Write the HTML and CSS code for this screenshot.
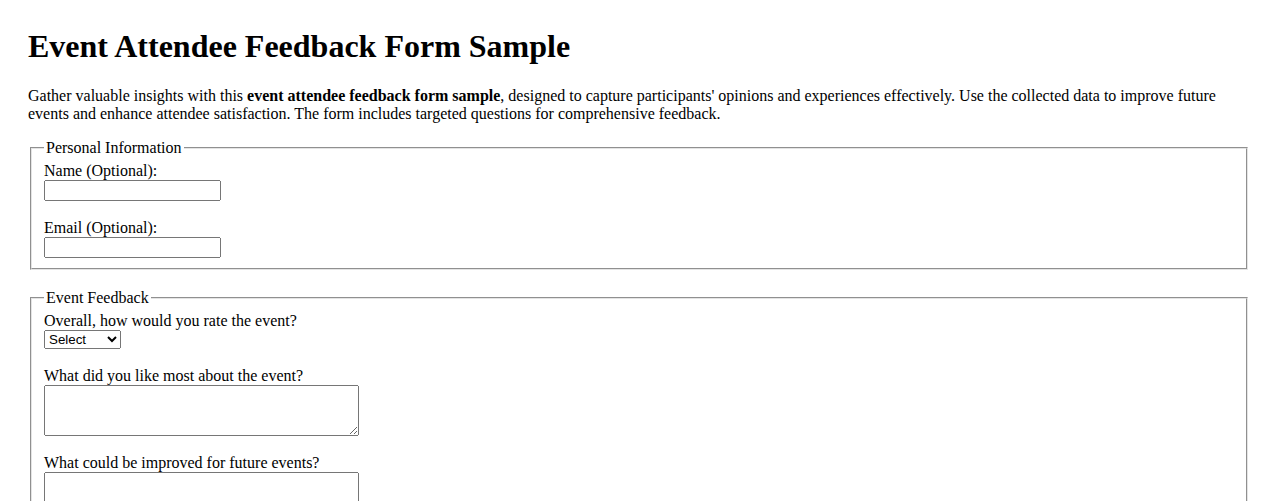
FILE: index.html
```html
<!DOCTYPE html>
<html lang="en">
<head>
<meta charset="utf-8">
<title>Event Attendee Feedback Form Sample</title>
<link rel="stylesheet" href="styles.css">
</head>
<body>
<h1 class="title">Event Attendee Feedback Form Sample</h1>
<p class="intro">Gather valuable insights with this <strong>event attendee feedback form sample</strong>, designed to capture participants' opinions and experiences effectively. Use the collected data to improve future events and enhance attendee satisfaction. The form includes targeted questions for comprehensive feedback.</p>
<form class="form">
  <fieldset class="section">
    <legend>Personal Information</legend>
    <div class="field">
      <label for="name">Name (Optional):</label>
      <input class="text-input" type="text" id="name" name="name">
    </div>
    <div class="field">
      <label for="email">Email (Optional):</label>
      <input class="text-input" type="email" id="email" name="email">
    </div>
  </fieldset>
  <fieldset class="section">
    <legend>Event Feedback</legend>
    <div class="field">
      <label for="rating">Overall, how would you rate the event?</label>
      <select class="select-input" id="rating" name="rating">
        <option>Select</option>
        <option>Excellent</option>
        <option>Good</option>
        <option>Average</option>
        <option>Poor</option>
      </select>
    </div>
    <div class="field">
      <label for="liked">What did you like most about the event?</label>
      <textarea class="area-input" id="liked" name="liked" rows="3"></textarea>
    </div>
    <div class="field">
      <label for="improve">What could be improved for future events?</label>
      <textarea class="area-input" id="improve" name="improve" rows="3"></textarea>
    </div>
  </fieldset>
</form>
</body>
</html>
```
FILE: styles.css
```css
body {
  margin: 8px;
  padding: 20px;
  font-family: "Liberation Serif", "Times New Roman", serif;
  font-size: 16px;
  color: #000;
  background: #fff;
}

.title {
  margin: 0 0 22px;
  font-size: 32px;
  font-weight: bold;
}

.intro {
  margin: 0 0 16px;
}

.form {
  display: flex;
  flex-direction: column;
  gap: 19px;
}

.section {
  margin: 0 2px;
  padding: 5px 12px 10px;
  border: 2px groove #e4e4e4;
  display: flex;
  flex-direction: column;
  gap: 18px;
  min-width: 0;
}

.section legend {
  padding: 0 2px;
}

.field {
  display: flex;
  flex-direction: column;
  align-items: flex-start;
}

.field label {
  line-height: 18px;
}

.text-input {
  box-sizing: border-box;
  width: 177px;
  height: 21px;
  margin: 0;
}

.select-input {
  box-sizing: border-box;
  width: 77px;
  height: 19px;
  margin: 0;
  font-family: "Liberation Sans", Arial, sans-serif;
  font-size: 13.33px;
}

.area-input {
  box-sizing: border-box;
  width: 315px;
  height: 51px;
  margin: 0;
}
```
